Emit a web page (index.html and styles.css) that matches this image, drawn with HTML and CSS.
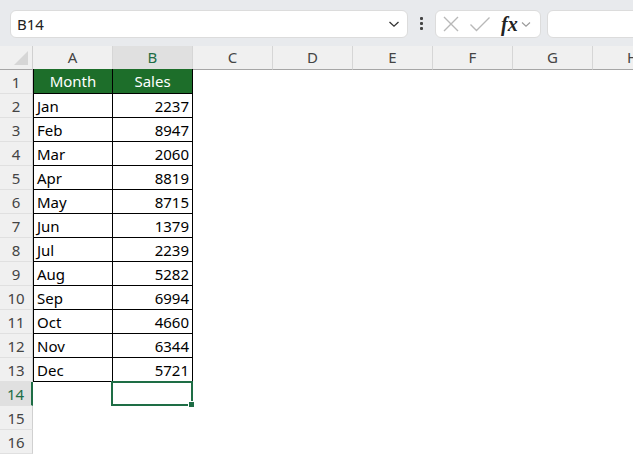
FILE: index.html
```html
<!DOCTYPE html>
<html>
<head>
<meta charset="utf-8">
<link rel="stylesheet" href="styles.css">
</head>
<body>
<div class="toolbar">
  <div class="namebox">
    <span class="nb-text">B14</span>
    <svg class="chev" width="12" height="8" viewBox="0 0 12 8"><path d="M1.5 2 L6 6.2 L10.5 2" fill="none" stroke="#333" stroke-width="1.3"/></svg>
  </div>
  <div class="dots"><span></span><span></span><span></span></div>
  <div class="fxbox">
    <svg class="ic" width="18" height="18" viewBox="0 0 18 18"><path d="M2 2 L16 16 M16 2 L2 16" stroke="#b8b8b8" stroke-width="1.4" fill="none"/></svg>
    <svg class="ic" width="22" height="18" viewBox="0 0 22 18"><path d="M1.5 9.5 L7.5 15.5 L20.5 2.5" stroke="#b8b8b8" stroke-width="1.4" fill="none"/></svg>
    <span class="fx">fx</span>
    <svg class="chev2" width="10" height="7" viewBox="0 0 10 7"><path d="M1 1.5 L5 5.2 L9 1.5" fill="none" stroke="#999" stroke-width="1.1"/></svg>
  </div>
  <div class="formula"></div>
</div>
<div class="sheet">
  <div class="corner"><div class="tri"></div></div>
  <div class="ch">A</div><div class="ch sel">B</div><div class="ch">C</div><div class="ch">D</div><div class="ch">E</div><div class="ch">F</div><div class="ch">G</div><div class="ch">H</div>

  <div class="rh">1</div><div class="c t l hd">Month</div><div class="c t hd">Sales</div><div class="c"></div><div class="c"></div><div class="c"></div><div class="c"></div><div class="c"></div><div class="c"></div>
  <div class="rh">2</div><div class="c t l">Jan</div><div class="c t n">2237</div><div class="c"></div><div class="c"></div><div class="c"></div><div class="c"></div><div class="c"></div><div class="c"></div>
  <div class="rh">3</div><div class="c t l">Feb</div><div class="c t n">8947</div><div class="c"></div><div class="c"></div><div class="c"></div><div class="c"></div><div class="c"></div><div class="c"></div>
  <div class="rh">4</div><div class="c t l">Mar</div><div class="c t n">2060</div><div class="c"></div><div class="c"></div><div class="c"></div><div class="c"></div><div class="c"></div><div class="c"></div>
  <div class="rh">5</div><div class="c t l">Apr</div><div class="c t n">8819</div><div class="c"></div><div class="c"></div><div class="c"></div><div class="c"></div><div class="c"></div><div class="c"></div>
  <div class="rh">6</div><div class="c t l">May</div><div class="c t n">8715</div><div class="c"></div><div class="c"></div><div class="c"></div><div class="c"></div><div class="c"></div><div class="c"></div>
  <div class="rh">7</div><div class="c t l">Jun</div><div class="c t n">1379</div><div class="c"></div><div class="c"></div><div class="c"></div><div class="c"></div><div class="c"></div><div class="c"></div>
  <div class="rh">8</div><div class="c t l">Jul</div><div class="c t n">2239</div><div class="c"></div><div class="c"></div><div class="c"></div><div class="c"></div><div class="c"></div><div class="c"></div>
  <div class="rh">9</div><div class="c t l">Aug</div><div class="c t n">5282</div><div class="c"></div><div class="c"></div><div class="c"></div><div class="c"></div><div class="c"></div><div class="c"></div>
  <div class="rh">10</div><div class="c t l">Sep</div><div class="c t n">6994</div><div class="c"></div><div class="c"></div><div class="c"></div><div class="c"></div><div class="c"></div><div class="c"></div>
  <div class="rh">11</div><div class="c t l">Oct</div><div class="c t n">4660</div><div class="c"></div><div class="c"></div><div class="c"></div><div class="c"></div><div class="c"></div><div class="c"></div>
  <div class="rh">12</div><div class="c t l">Nov</div><div class="c t n">6344</div><div class="c"></div><div class="c"></div><div class="c"></div><div class="c"></div><div class="c"></div><div class="c"></div>
  <div class="rh">13</div><div class="c t l">Dec</div><div class="c t n">5721</div><div class="c"></div><div class="c"></div><div class="c"></div><div class="c"></div><div class="c"></div><div class="c"></div>
  <div class="rh sel">14</div><div class="c"></div><div class="c active"><div class="selbox"><div class="handle"></div></div></div><div class="c"></div><div class="c"></div><div class="c"></div><div class="c"></div><div class="c"></div><div class="c"></div>
  <div class="rh">15</div><div class="c"></div><div class="c"></div><div class="c"></div><div class="c"></div><div class="c"></div><div class="c"></div><div class="c"></div><div class="c"></div>
  <div class="rh">16</div><div class="c"></div><div class="c"></div><div class="c"></div><div class="c"></div><div class="c"></div><div class="c"></div><div class="c"></div><div class="c"></div>
</div>
</body>
</html>
```
FILE: styles.css
```css
html, body {
  margin: 0;
  padding: 0;
  background: #ffffff;
  width: 633px;
  height: 454px;
  overflow: hidden;
  font-family: "Noto Sans", "Liberation Sans", sans-serif;
}

.toolbar {
  height: 46px;
  background: #e8eaed;
  display: flex;
  align-items: center;
  padding-left: 10px;
  box-sizing: border-box;
  white-space: nowrap;
  overflow: hidden;
}
.toolbar > * {
  flex-shrink: 0;
}

.namebox {
  width: 398px;
  height: 28px;
  box-sizing: border-box;
  background: #fff;
  border: 1px solid #dcdcdc;
  border-radius: 6px;
  display: flex;
  align-items: center;
  justify-content: space-between;
  padding: 0 7px 0 6px;
  margin-top: 1px;
}

.nb-text {
  font-size: 15px;
  color: #222;
}

.dots {
  width: 27px;
  display: flex;
  flex-direction: column;
  align-items: center;
  gap: 2px;
}
.dots span {
  width: 3px;
  height: 3px;
  background: #444;
  border-radius: 1px;
}

.fxbox {
  width: 106px;
  height: 28px;
  box-sizing: border-box;
  background: #fff;
  border: 1px solid #dcdcdc;
  border-radius: 6px;
  display: flex;
  align-items: center;
  padding-left: 6px;
  margin-top: 1px;
}
.fxbox .ic { margin-right: 9px; }
.fx {
  font-family: "Liberation Serif", "DejaVu Serif", serif;
  font-style: italic;
  font-weight: bold;
  font-size: 20px;
  color: #222;
  margin-left: 1px;
  margin-right: 3px;
  line-height: 1;
}
.chev2 { margin-top: 2px; }

.formula {
  margin-left: 6px;
  width: 120px;
  height: 28px;
  box-sizing: border-box;
  background: #fff;
  border: 1px solid #dcdcdc;
  border-radius: 6px;
  margin-top: 1px;
}

.sheet {
  display: grid;
  grid-template-columns: 33px repeat(8, 80px);
  grid-auto-rows: 24px;
  font-size: 15px;
}

.corner {
  background: #f0f0f0;
  border-right: 1px solid #d0d0d0;
  border-bottom: 1px solid #a6a6a6;
  position: relative;
}
.tri {
  position: absolute;
  right: 4px;
  bottom: 4px;
  width: 0;
  height: 0;
  border-left: 14px solid transparent;
  border-bottom: 14px solid #d6d6d6;
}

.ch {
  background: #f0f0f0;
  border-right: 1px solid #d6d6d6;
  border-bottom: 1px solid #a6a6a6;
  color: #444;
  display: flex;
  align-items: center;
  justify-content: center;
  padding-bottom: 1px;
  box-sizing: border-box;
}
.ch.sel {
  background: #e0e0e0;
  color: #1e6d45;
}

.rh {
  background: #f0f0f0;
  border-right: 1px solid #d0d0d0;
  border-bottom: 1px solid #e0e0e0;
  color: #444;
  display: flex;
  align-items: center;
  justify-content: center;
  box-sizing: border-box;
}
.rh.sel {
  background: #e0e0e0;
  color: #1e6d45;
  border-right: 2px solid #1e6d45;
}

.c {
  box-sizing: border-box;
  display: flex;
  align-items: center;
  padding: 0 3px 0 3px;
  color: #000;
}
.c.t {
  border-right: 1px solid #000;
  border-bottom: 1px solid #000;
}
.c.l {
  border-left: 1px solid #000;
}
.c.hd {
  background: #1d6e2a;
  color: #fff;
  justify-content: center;
  margin-top: -1px;
}
.c.n {
  justify-content: flex-end;
}

.active {
  position: relative;
}
.selbox {
  position: absolute;
  left: -2px;
  top: -1px;
  width: 82px;
  height: 25px;
  box-sizing: border-box;
  border: 2px solid #1e6d45;
}
.handle {
  position: absolute;
  right: -4px;
  bottom: -4px;
  width: 5px;
  height: 5px;
  background: #1e6d45;
  border: 1px solid #fff;
}
```
